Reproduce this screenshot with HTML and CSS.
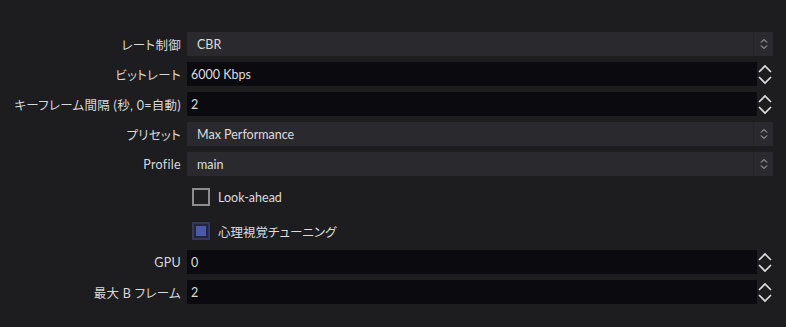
FILE: index.html
```html
<!DOCTYPE html>
<html lang="ja">
<head>
<meta charset="utf-8">
<link rel="stylesheet" href="styles.css">
</head>
<body>
<div class="form">
  <div class="label">レート制御</div>
  <div class="combo"><span class="value">CBR</span><span class="arrows"><svg width="8" height="12" viewBox="0 0 8 12"><path d="M1 4.5 L4 1.5 L7 4.5 M1 7.5 L4 10.5 L7 7.5" fill="none" stroke="#c9c9cc" stroke-width="1"/></svg></span></div>

  <div class="label">ビットレート</div>
  <div class="spin"><span class="input">6000 Kbps</span><span class="btns"><svg width="16" height="22" viewBox="0 0 16 22"><path d="M2 9 L8 3 L14 9 M2 14 L8 20 L14 14" fill="none" stroke="#e2e2e4" stroke-width="1.6"/></svg></span></div>

  <div class="label">キーフレーム間隔 (秒, 0=自動)</div>
  <div class="spin"><span class="input">2</span><span class="btns"><svg width="16" height="22" viewBox="0 0 16 22"><path d="M2 9 L8 3 L14 9 M2 14 L8 20 L14 14" fill="none" stroke="#e2e2e4" stroke-width="1.6"/></svg></span></div>

  <div class="label">プリセット</div>
  <div class="combo"><span class="value">Max Performance</span><span class="arrows"><svg width="8" height="12" viewBox="0 0 8 12"><path d="M1 4.5 L4 1.5 L7 4.5 M1 7.5 L4 10.5 L7 7.5" fill="none" stroke="#c9c9cc" stroke-width="1"/></svg></span></div>

  <div class="label">Profile</div>
  <div class="combo"><span class="value">main</span><span class="arrows"><svg width="8" height="12" viewBox="0 0 8 12"><path d="M1 4.5 L4 1.5 L7 4.5 M1 7.5 L4 10.5 L7 7.5" fill="none" stroke="#c9c9cc" stroke-width="1"/></svg></span></div>

  <div class="label"></div>
  <div class="check first"><span class="box"></span><span class="ctext">Look-ahead</span></div>

  <div class="label"></div>
  <div class="check second"><span class="box checked"><span class="fill"></span></span><span class="ctext">心理視覚チューニング</span></div>

  <div class="label">GPU</div>
  <div class="spin"><span class="input">0</span><span class="btns"><svg width="16" height="22" viewBox="0 0 16 22"><path d="M2 9 L8 3 L14 9 M2 14 L8 20 L14 14" fill="none" stroke="#e2e2e4" stroke-width="1.6"/></svg></span></div>

  <div class="label">最大 B フレーム</div>
  <div class="spin"><span class="input">2</span><span class="btns"><svg width="16" height="22" viewBox="0 0 16 22"><path d="M2 9 L8 3 L14 9 M2 14 L8 20 L14 14" fill="none" stroke="#e2e2e4" stroke-width="1.6"/></svg></span></div>
</div>
</body>
</html>
```
FILE: styles.css
```css
html, body {
  margin: 0;
  padding: 0;
  background: #1d1d20;
  width: 786px;
  height: 327px;
  overflow: hidden;
}

body {
  font-family: "Lato", "Noto Sans CJK JP", sans-serif;
  font-size: 12.5px;
  color: #dcdcde;
  font-feature-settings: "palt";
}

.form {
  display: grid;
  grid-template-columns: 173px 586px;
  column-gap: 6px;
  row-gap: 6px;
  padding: 32px 0 0 8px;
}

.label {
  display: flex;
  align-items: center;
  justify-content: flex-end;
  height: 24px;
  white-space: nowrap;
  color: #d8d8da;
  letter-spacing: 0.3px;
}

.combo {
  display: flex;
  align-items: center;
  height: 24px;
  background: #2a2a2e;
}

.combo .value {
  flex: 1;
  padding-left: 10px;
}

.combo .arrows {
  width: 19px;
  height: 24px;
  border-left: 1px solid #252528;
  display: flex;
  align-items: center;
  justify-content: center;
}

.spin {
  display: flex;
  height: 24px;
}

.spin .input {
  flex: 1;
  background: #0b0b0f;
  display: flex;
  align-items: center;
  padding-left: 4px;
}

.spin .btns {
  width: 16px;
  display: flex;
  align-items: center;
  justify-content: center;
}

.check {
  display: flex;
  align-items: center;
  gap: 8px;
  padding-left: 5px;
}

.check.first {
  height: 30px;
}

.check.second {
  height: 26px;
}

.check .box {
  width: 18px;
  height: 18px;
  box-sizing: border-box;
  border: 2px solid #8d8d90;
  background: #1f1f22;
  display: flex;
  align-items: center;
  justify-content: center;
}

.check .box.checked {
  border-color: #34385a;
  background: #23253a;
}

.check .fill {
  width: 10px;
  height: 10px;
  background: #4a5aa8;
}

.ctext {
  color: #dcdcde;
}
```
